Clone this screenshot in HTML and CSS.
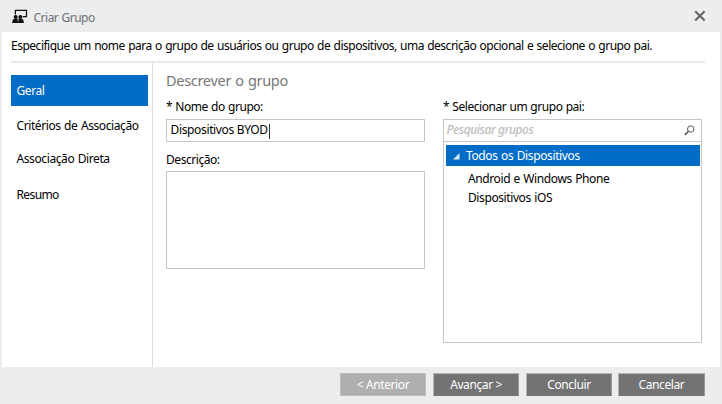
FILE: index.html
```html
<!DOCTYPE html>
<html lang="pt-BR">
<head>
<meta charset="utf-8">
<title>Criar Grupo</title>
<link rel="stylesheet" href="styles.css">
</head>
<body>
<div class="dialog">
  <header class="titlebar">
    <svg class="group-icon" width="16" height="15" viewBox="0 0 16 15">
      <path d="M3.4 5.5V1.4H14.5V7.6H10.8" fill="none" stroke="#111" stroke-width="1.2"/>
      <circle cx="3.7" cy="8" r="2" fill="#111"/>
      <circle cx="8.4" cy="8" r="2" fill="#111"/>
      <path d="M0 14L.8 10.8 2.5 9.8H9.6L11.2 10.8 12 14Z" fill="#111"/>
      <path d="M5.2 10L6.1 12.4 7 10" fill="none" stroke="#9a9b9c" stroke-width=".6"/>
    </svg>
    <h1 class="title">Criar Grupo</h1>
    <svg class="close" width="12" height="12" viewBox="0 0 12 12"><path d="M1.2 1.2L10.6 10.6M10.6 1.2L1.2 10.6" stroke="#666" stroke-width="2.1" fill="none"/></svg>
  </header>
  <main class="panel">
    <p class="intro">Especifique um nome para o grupo de usuários ou grupo de dispositivos, uma descrição opcional e selecione o grupo pai.</p>
    <div class="body">
      <nav class="steps">
        <div class="step active">Geral</div>
        <div class="step criteria">Critérios de Associação</div>
        <div class="step direct">Associação Direta</div>
        <div class="step summary">Resumo</div>
      </nav>
      <section class="content">
        <h2 class="heading">Descrever o grupo</h2>
        <div class="columns">
          <div class="column">
            <div class="label name-label">* Nome do grupo:</div>
            <div class="field"><span class="value">Dispositivos BYOD</span><i class="caret"></i></div>
            <div class="label desc-label">Descrição:</div>
            <div class="textarea"></div>
          </div>
          <div class="column">
            <div class="label parent-label">* Selecionar um grupo pai:</div>
            <div class="field search"><span class="placeholder">Pesquisar grupos</span>
              <svg class="magnifier" width="11" height="11" viewBox="0 0 11 11"><circle cx="6.7" cy="4" r="3.2" fill="none" stroke="#555"/><path d="M4.4 6.4L.8 9.9" stroke="#555" stroke-width="1.5"/></svg>
            </div>
            <div class="tree">
              <div class="root"><svg class="arrow" width="7" height="7" viewBox="0 0 7 7"><path d="M6.5 0V6.5H0Z" fill="#d5e8f7"/></svg><span class="root-name">Todos os Dispositivos</span></div>
              <div class="leaf android">Android e Windows Phone</div>
              <div class="leaf ios">Dispositivos iOS</div>
            </div>
          </div>
        </div>
      </section>
    </div>
  </main>
  <footer class="actions">
    <div class="button disabled">&lt; Anterior</div>
    <div class="button">Avançar &gt;</div>
    <div class="button">Concluir</div>
    <div class="button last">Cancelar</div>
  </footer>
</div>
</body>
</html>
```
FILE: styles.css
```css
* { box-sizing: border-box; }
body { margin: 0; font: 12px/16px "Noto Sans", sans-serif; color: #000; }
.dialog { width: 722px; height: 404px; background: #ebedef; display: flex; flex-direction: column; overflow: hidden; white-space: nowrap; }
.titlebar { height: 32px; display: flex; align-items: flex-start; padding: 9px 16px 0 12px; }
.title { margin: 0 0 0 5.5px; font-size: 12px; line-height: 18px; font-weight: 400; color: #707070; letter-spacing: -.5px; word-spacing: .5px; }
.close { margin: 1px 0 0 auto; }
.panel { height: 335px; margin: 0 2px; background: #fff; padding: 6px 15px 0 9px; }
.intro { margin: 0; height: 25px; border-bottom: 2px solid #e9e9ea; letter-spacing: -.49px; word-spacing: .7px; }
.body { display: flex; height: 304px; }
.steps { width: 142px; padding: 12px 4px 0 0; border-right: 1px solid #ddd; }
.step { height: 31px; padding: 8px 0 0 5.5px; letter-spacing: -.4px; word-spacing: .7px; }
.active { background: #006cc5; color: #fff; }
.criteria { margin-top: 4px; }
.direct { margin-top: 2px; }
.summary { margin-top: 5px; letter-spacing: -.6px; }
.content { padding: 6px 0 0 13px; }
.heading { margin: 0; font-size: 14.5px; font-weight: 400; line-height: 22px; color: #777; letter-spacing: -.3px; word-spacing: .7px; }
.columns { display: flex; gap: 18px; padding-top: 8px; }
.column { width: 259px; }
.label { height: 20px; letter-spacing: -.45px; word-spacing: .5px; }
.field { height: 23px; border: 1px solid #c6c6c6; display: flex; align-items: flex-start; padding: 2px 4px 0 3.5px; letter-spacing: -.35px; }
.caret { width: 1px; height: 15px; background: #333; margin: 2px 0 0 1px; }
.desc-label { margin-top: 10px; height: 19px; }
.textarea { height: 98px; border: 1px solid #c6c6c6; }
.search { padding: 2px 6px 0 2.5px; }
.placeholder { font-style: italic; font-weight: 500; color: #bdbdbd; letter-spacing: -.45px; }
.magnifier { margin: 3px 0 0 auto; }
.tree { height: 201px; border: 1px solid #c6c6c6; border-top: 0; padding: 3px 1px 0 2px; }
.root { height: 21px; background: #006cc5; color: #fff; display: flex; padding: 3px 0 0 7px; line-height: 16px; }
.arrow { margin-top: 5px; }
.root-name { margin-left: 6px; letter-spacing: -.38px; word-spacing: .7px; }
.leaf { padding-left: 22px; height: 19px; line-height: 19px; letter-spacing: -.4px; word-spacing: .7px; }
.android { margin-top: 3px; }
.actions { height: 37px; display: flex; gap: 7px; padding: 6px 17px 0 340px; }
.button { width: 86px; height: 23px; background: #737373; border: 1px solid #b5b5b5; border-right-color: #999; border-bottom-color: #777; color: #fff; text-align: center; line-height: 21px; letter-spacing: -.4px; }
.disabled { background: #afafaf; border-color: #bcbcbc; }
.last { margin-left: -1px; width: 87px; }
```
